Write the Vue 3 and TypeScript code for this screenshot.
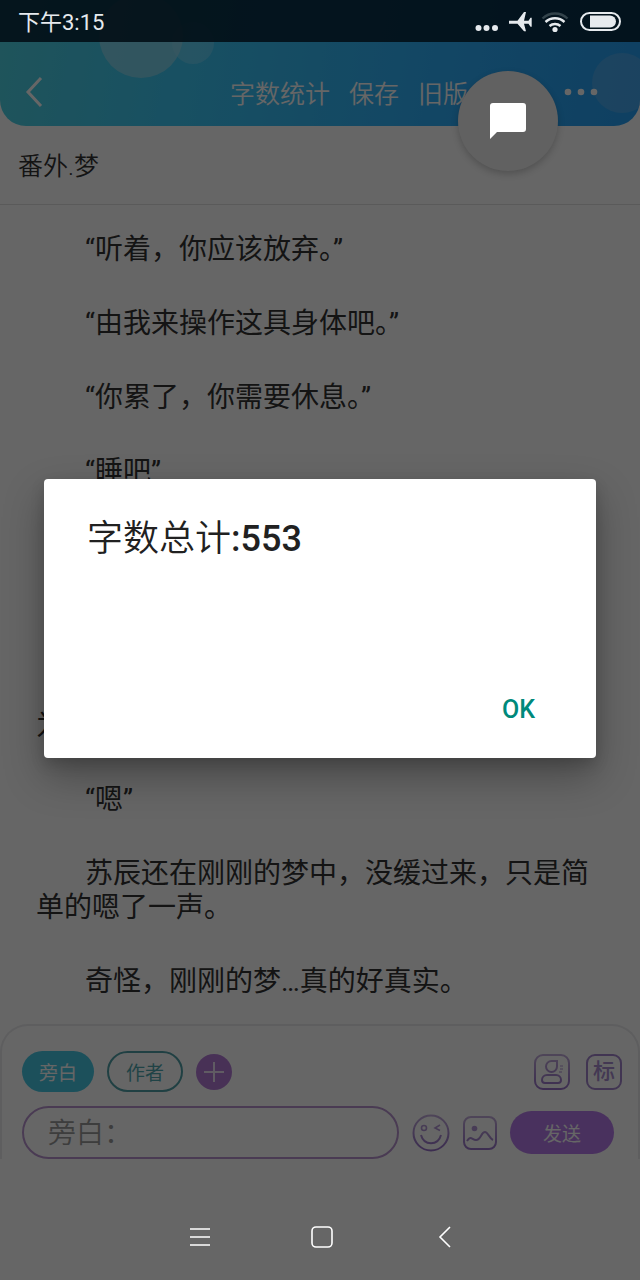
<script setup lang="ts">
import { ref } from 'vue'

interface Line {
  text: string
  kind?: 'resumed'
}

const headerActions = ['字数统计', '保存', '旧版']
const title = ref('番外.梦')
const message = ref('')
const wordCount = 553

const lines: Line[] = [
  { text: '“听着，你应该放弃。”' },
  { text: '“由我来操作这具身体吧。”' },
  { text: '“你累了，你需要休息。”' },
  { text: '“睡吧”' },
  { text: '为', kind: 'resumed' },
  { text: '“嗯”' },
  { text: '苏辰还在刚刚的梦中，没缓过来，只是简单的嗯了一声。' },
  { text: '奇怪，刚刚的梦…真的好真实。' },
]
</script>

<template>
  <div class="screen">
    <div class="top">
      <svg class="bubbles" viewBox="0 0 640 126" preserveAspectRatio="none" aria-hidden="true">
        <circle cx="193" cy="43" r="21" fill="#fff" fill-opacity=".18" />
        <circle cx="141" cy="36" r="42" fill="#90d8ec" fill-opacity=".75" />
        <circle cx="622" cy="83" r="30" fill="#6cb4e8" fill-opacity=".45" />
      </svg>
      <div class="status">
        <span class="clock">下午3:15</span>
        <svg class="status-icons" viewBox="0 0 148 24" aria-hidden="true">
          <g fill="#e6eaee">
            <circle cx="3.500" cy="17" r="3" />
            <circle cx="11.500" cy="17" r="3" />
            <circle cx="20" cy="17" r="3" />
            <path d="M34 9.800h8.500L49 1h2l-2 8.800h4.500l2-3h1.200v9h-1.200l-2-3H49l2 7.400h-2l-6.500-7.400H34z" />
            <circle cx="80" cy="18.500" r="2.600" />
          </g>
          <g fill="none" stroke-width="2.400">
            <path d="M67.500 7.500a18 18 0 0 1 25 0" stroke="#33434b" />
            <path d="M70.500 11a14 14 0 0 1 19 0M74.500 15a8.500 8.500 0 0 1 11 0" stroke="#e6eaee" />
          </g>
          <rect x="106" y="2" width="39" height="17" rx="8.500" fill="none" stroke="#e6eaee" stroke-width="2" />
          <path d="M115 4.500h20a6 6 0 0 1 0 12h-20z" fill="#e6eaee" />
        </svg>
      </div>
      <header class="header">
        <button class="plain" aria-label="返回">
          <svg width="20" height="32" viewBox="0 0 20 32"><path d="M17 2 4 16l13 14" fill="none" stroke="#fff" stroke-width="3" /></svg>
        </button>
        <nav class="actions">
          <button v-for="action in headerActions" :key="action" class="plain">{{ action }}</button>
        </nav>
        <button class="plain" aria-label="更多">
          <svg width="34" height="8" viewBox="0 0 34 8" fill="#fff"><circle cx="4" cy="4" r="3.300" /><circle cx="17" cy="4" r="3.300" /><circle cx="30" cy="4" r="3.300" /></svg>
        </button>
      </header>
    </div>

    <input v-model="title" class="title" aria-label="标题" />

    <main class="story">
      <p v-for="(line, index) in lines" :key="index" :class="line.kind">{{ line.text }}</p>
    </main>

    <section class="composer">
      <div class="row">
        <button class="plain role active">旁白</button>
        <button class="plain role">作者</button>
        <button class="plain" aria-label="添加角色">
          <svg width="36" height="36" viewBox="0 0 36 36"><circle cx="18" cy="18" r="18" fill="#b47cd8" /><path d="M8 18h20M18 8v20" stroke="#f0e4f8" stroke-width="2" /></svg>
        </button>
        <span class="spring"></span>
        <button class="plain" aria-label="角色">
          <svg width="36" height="36" viewBox="0 0 36 36" fill="none" stroke="url(#violet)" stroke-width="2">
            <rect x="1" y="1" width="34" height="34" rx="8" />
            <path d="M12 12.500a5.500 5.500 0 0 1 5.500-5.500H23v5.500a5.500 5.500 0 0 1-11 0z" />
            <path d="M13 21h9a5 5 0 0 1 5 5q0 3-3 3H11q-3 0-3-3a5 5 0 0 1 5-5z" />
            <path d="M26 12h3M26 15h3M25 18h3" stroke-width="1" />
          </svg>
        </button>
        <button class="plain tag">标</button>
      </div>
      <div class="row entry">
        <input v-model="message" class="message" placeholder="旁白：" aria-label="旁白" />
        <button class="plain" aria-label="表情">
          <svg width="38" height="38" viewBox="0 0 38 38" fill="none" stroke="url(#violet)" stroke-width="2">
            <circle cx="19" cy="19" r="17.500" />
            <circle cx="12" cy="14" r="2.500" stroke-width="1.600" />
            <path d="m28 11-5 3 5 2.500" stroke-width="1.600" />
            <path d="M9 21c3 11 17 11 20 0" />
          </svg>
        </button>
        <button class="plain" aria-label="图片">
          <svg width="34" height="34" viewBox="0 0 34 34" fill="none" stroke="url(#violet)" stroke-width="2">
            <defs>
              <linearGradient id="violet" gradientUnits="userSpaceOnUse" x1="0" y1="0" x2="0" y2="36">
                <stop offset="0" stop-color="#c4aedc" />
                <stop offset="1" stop-color="#9670c8" />
              </linearGradient>
            </defs>
            <rect x="1" y="1" width="32" height="32" rx="7" />
            <circle cx="11.500" cy="12.500" r="2.800" fill="#b496d8" stroke="none" />
            <path d="M4 25c4-6 5-1 9-1 5 0 5-8 9-8 3 0 4 6 8 8" />
          </svg>
        </button>
        <button class="plain send">发送</button>
      </div>
    </section>

    <nav class="system">
      <button class="plain" aria-label="菜单">
        <svg width="22" height="22" viewBox="0 0 22 22"><path d="M1 3h20M1 11h20M1 19h20" stroke="#fff" stroke-width="1.600" /></svg>
      </button>
      <button class="plain" aria-label="主页">
        <svg width="22" height="22" viewBox="0 0 22 22"><rect x="1" y="1" width="20" height="20" rx="4" fill="none" stroke="#fff" stroke-width="1.600" /></svg>
      </button>
      <button class="plain" aria-label="返回">
        <svg width="22" height="22" viewBox="0 0 22 22"><path d="M17 1 7 11l10 10" fill="none" stroke="#fff" stroke-width="1.600" /></svg>
      </button>
    </nav>

    <div class="backdrop">
      <div class="dialog" role="alertdialog" aria-labelledby="dialog-title">
        <h2 id="dialog-title">字数总计<b>:{{ wordCount }}</b></h2>
        <button class="plain ok">OK</button>
      </div>
    </div>
    <button class="plain bubble" aria-label="聊天">
      <svg width="38" height="38" viewBox="0 0 38 38" fill="#fff"><path d="M4 1h30q3 0 3 3v23q0 3-3 3H8l-7 7V4q0-3 3-3z" /></svg>
    </button>
  </div>
</template>

<style>
body {
  margin: 0;
}
</style>

<style scoped>
.screen {
  position: relative;
  display: flex;
  flex-direction: column;
  min-height: 100vh;
  background: #fff;
  color: #333;
  font-family: Roboto, "Noto Sans CJK SC", sans-serif;
}
.screen * {
  box-sizing: border-box;
}
.plain {
  border: 0;
  padding: 0;
  background: none;
  color: inherit;
  font: inherit;
}
svg {
  display: block;
}
.top {
  position: relative;
  border-radius: 0 0 26px 26px;
  overflow: hidden;
  background: linear-gradient(100deg, #4fd2e2 0%, #3cc8f6 30%, #2eaefa 70%, #269ff4 100%);
  color: #fff;
}
.bubbles {
  position: absolute;
  inset: 0;
  width: 100%;
  height: 100%;
}
.status {
  position: relative;
  z-index: 2;
  display: flex;
  align-items: center;
  justify-content: space-between;
  height: 42px;
  padding: 3px 17px 0 18px;
  background: rgba(2, 14, 22, 0.9);
  color: #e6eaee;
}
.clock {
  font-size: 22px;
  line-height: 32px;
}
.status-icons {
  width: 148px;
  height: 24px;
}
.header {
  position: relative;
  display: flex;
  align-items: center;
  height: 84px;
  padding: 16px 42px 0 24px;
}
.actions {
  display: flex;
  flex: 1;
  gap: 19px;
  padding-top: 6px;
  margin-left: 186px;
  font-size: 25px;
  font-weight: 350;
  line-height: 34px;
}
.title {
  height: 79px;
  border: 0;
  border-bottom: 1px solid #e2e2e2;
  padding: 0 18px 2px;
  background: none;
  color: #333;
  font: 350 25px/34px Roboto, "Noto Sans CJK SC", sans-serif;
}
.story {
  display: flex;
  flex: 1;
  flex-direction: column;
  gap: 40px;
  padding: 28px 36px 24px;
  font-size: 28px;
  line-height: 34px;
}
.story p {
  margin: 0;
  text-indent: 49px;
}
.story .resumed {
  margin-top: 180px;
  text-indent: 0;
}
.composer {
  display: flex;
  flex-direction: column;
  gap: 14px;
  border: 2px solid #ebebee;
  border-bottom: 0;
  border-radius: 28px 28px 0 0;
  padding: 25px 16px 0 20px;
}
.row {
  display: flex;
  align-items: center;
}
.role {
  height: 41px;
  width: 76px;
  margin-right: 13px;
  border: 2px solid #50a0a8;
  border-radius: 21px;
  color: #50a8b0;
  font-size: 19px;
}
.role.active {
  width: 72px;
  border: 0;
  background: #46c8e4;
  color: #fff;
}
.spring {
  flex: 1;
}
.tag {
  width: 36px;
  height: 36px;
  margin-left: 16px;
  border: 2px solid #a284cc;
  border-radius: 9px;
  color: #a88cd0;
  font-size: 22px;
  font-weight: 500;
  line-height: 30px;
}
.entry {
  gap: 13px;
  padding-right: 8px;
}
.message {
  flex: 1;
  min-width: 0;
  height: 53px;
  border: 2px solid #b894d0;
  border-radius: 27px;
  padding: 2px 24px 0;
  background: none;
  color: #333;
  font: 350 28px/36px Roboto, "Noto Sans CJK SC", sans-serif;
}
.message::placeholder {
  color: #999;
  opacity: 1;
}
.send {
  width: 104px;
  height: 43px;
  border-radius: 22px;
  background: #b67cea;
  color: #fff;
  font-size: 19px;
}
.system {
  position: relative;
  z-index: 2;
  display: flex;
  justify-content: center;
  gap: 100px;
  padding: 67px 0 32px 3px;
}
.backdrop {
  position: absolute;
  inset: 0;
  z-index: 1;
  display: flex;
  align-items: flex-start;
  justify-content: center;
  padding: 479px 44px 0;
  background: rgba(0, 0, 0, 0.6);
}
.dialog {
  display: flex;
  flex: 1;
  flex-direction: column;
  justify-content: space-between;
  min-height: 279px;
  border-radius: 4px;
  padding: 38px 61px 30px 43px;
  background: #fff;
  box-shadow: 0 18px 40px rgba(0, 0, 0, 0.3), 0 6px 14px rgba(0, 0, 0, 0.15);
  color: #212121;
}
.dialog h2 {
  margin: 0;
  font-size: 36px;
  font-weight: 350;
  line-height: 44px;
}
.dialog b {
  font-weight: 500;
}
.ok {
  align-self: flex-end;
  color: #00897b;
  font-size: 25px;
  font-weight: 500;
  line-height: 36px;
}
.bubble {
  position: absolute;
  top: 71px;
  right: 82px;
  z-index: 2;
  display: flex;
  align-items: center;
  justify-content: center;
  width: 100px;
  height: 100px;
  border-radius: 50%;
  background: #616161;
  box-shadow: 0 3px 7px rgba(0, 0, 0, 0.2);
}
</style>
